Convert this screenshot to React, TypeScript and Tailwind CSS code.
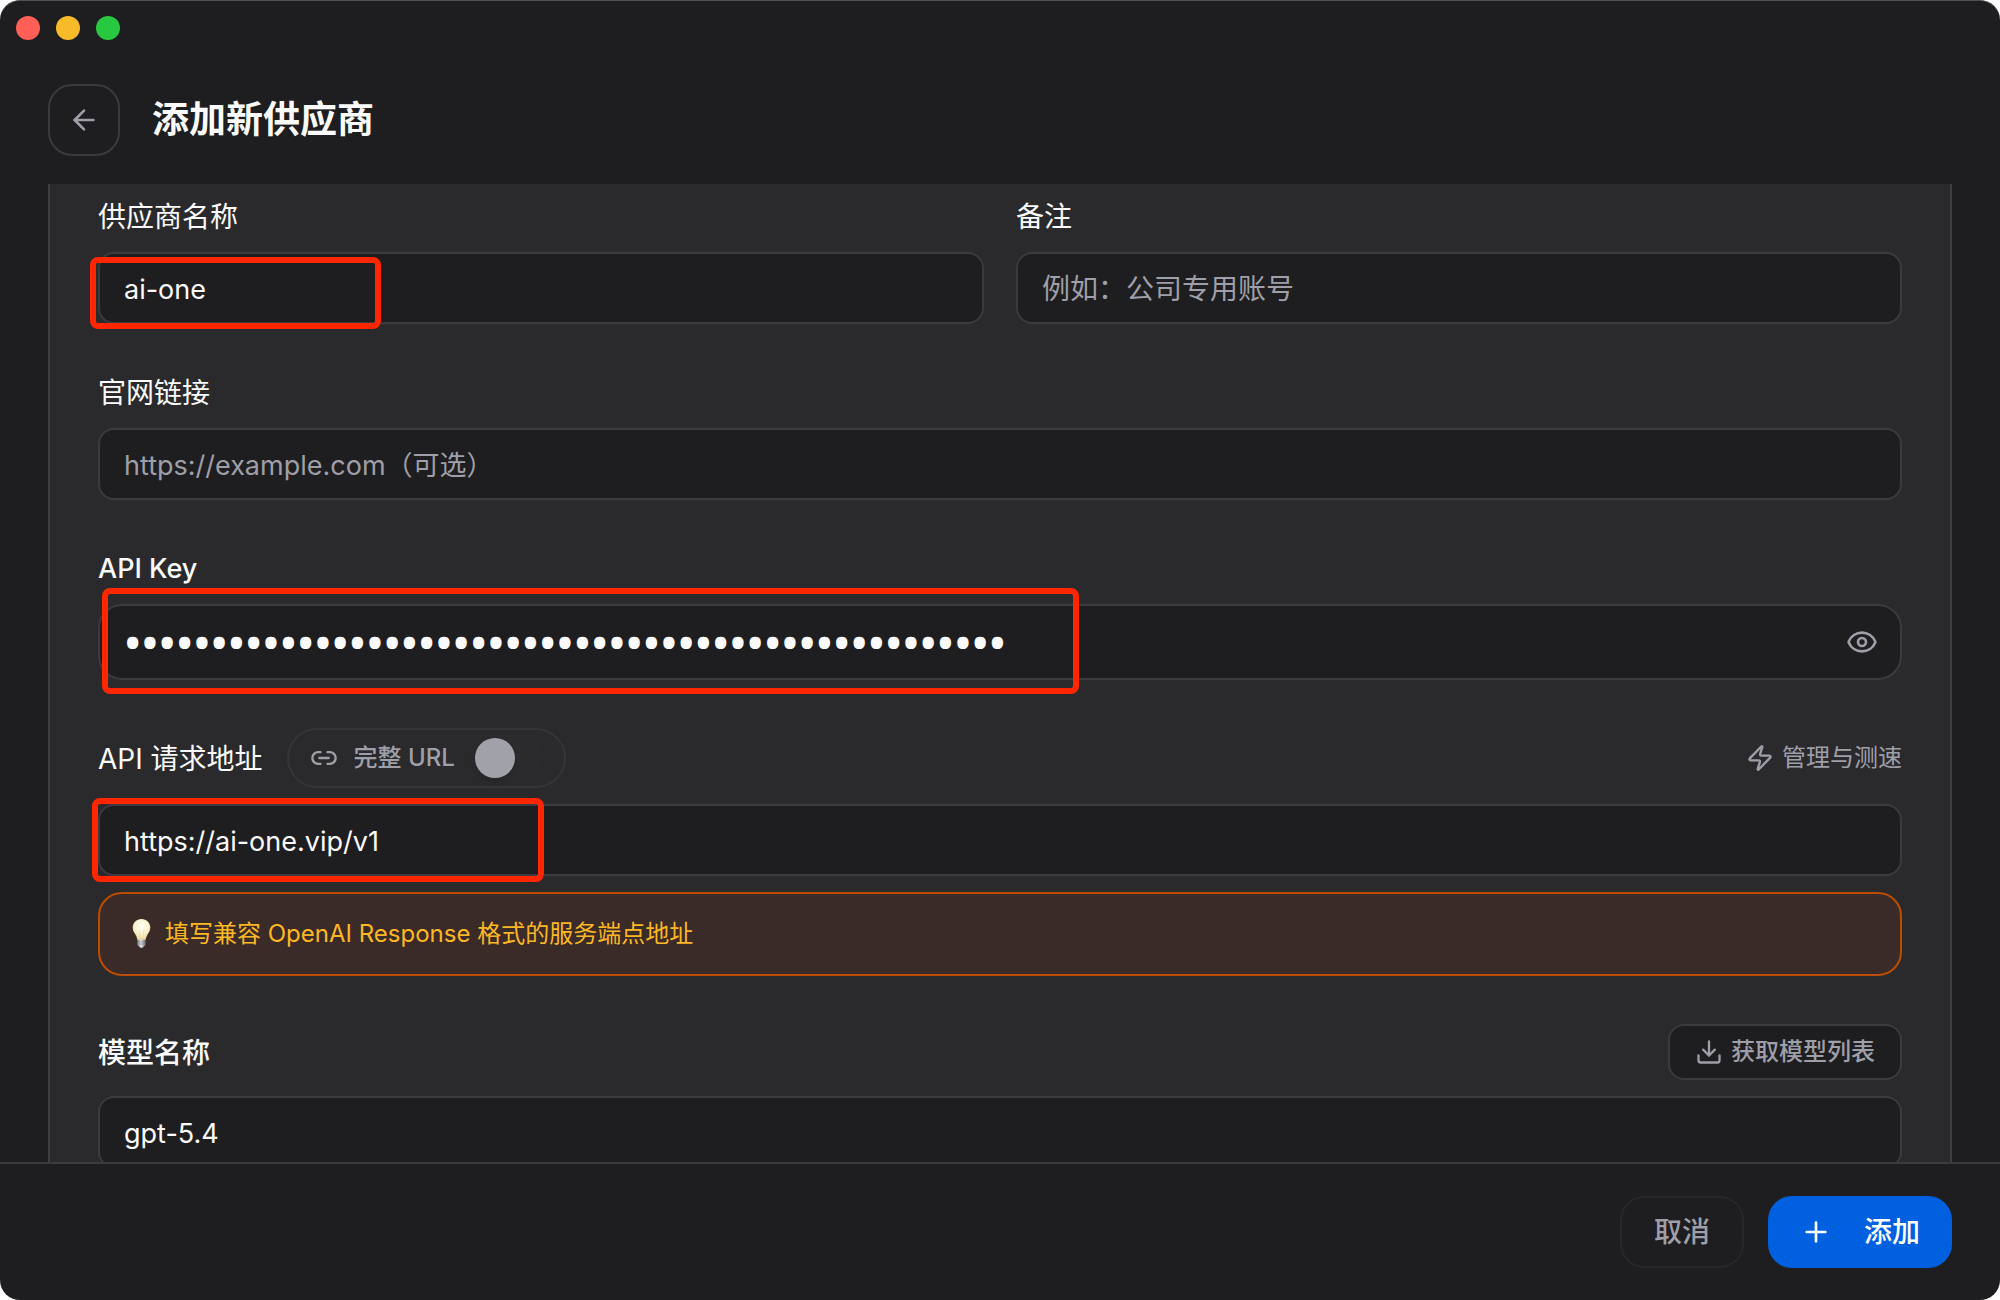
import React, { useState } from 'react';
import { ArrowLeft, Download, Eye, Link2, Plus, Zap } from 'lucide-react';

const labelClass = 'block h-10 pt-px leading-10';

const inputClass =
  'block h-18 w-full rounded-2xl border-2 border-[#3a3a3f] bg-[#1e1e20] px-6 pt-0.5 text-[27px] text-[#fafafa] placeholder:text-[#9f9fa9] placeholder:opacity-100 outline-none focus:border-[#3b82f6]';

// Red frame that marks a field the user has to fill in
const Highlight: React.FC<{ className: string }> = ({ className }) => (
  <div className={`pointer-events-none absolute rounded-lg border-6 border-[#ff2600] ${className}`} />
);

const Bulb: React.FC = () => (
  <svg width="32" height="32" viewBox="0 0 32 32" aria-hidden="true">
    <defs>
      <radialGradient id="bulb-glass" cx="0.5" cy="0.35" r="0.65">
        <stop offset="0" stopColor="#fffef6" />
        <stop offset="0.55" stopColor="#fbf3d0" />
        <stop offset="1" stopColor="#ecd692" />
      </radialGradient>
      <linearGradient id="bulb-base" x1="0" x2="1" y1="0" y2="0">
        <stop offset="0" stopColor="#8d9196" />
        <stop offset="0.45" stopColor="#e4e7ea" />
        <stop offset="1" stopColor="#6f7378" />
      </linearGradient>
    </defs>
    <path
      d="M16.5 1c-5.1 0-8.8 3.8-8.8 8.6 0 3.3 1.7 5.3 3 7.5 1 1.7 1.3 3.1 1.6 4.9h8.4c.3-1.8.6-3.2 1.6-4.9 1.3-2.2 3-4.2 3-7.5 0-4.8-3.7-8.6-8.8-8.6z"
      fill="url(#bulb-glass)"
    />
    <path d="M14 12l1.3 9.5M19 12l-1.3 9.5" stroke="#e6d7a6" strokeWidth="0.6" fill="none" />
    <path d="M12.5 21.5h8v5.2c0 .8-.7 1.3-1.5 1.5-.5 1-1.4 1.5-2.5 1.5s-2-.5-2.5-1.5c-.8-.2-1.5-.7-1.5-1.5z" fill="url(#bulb-base)" />
    <path d="M12.5 23.8h8M12.5 26h8" stroke="#777b80" strokeWidth="0.6" />
  </svg>
);

const App: React.FC = () => {
  const [name, setName] = useState('ai-one');
  const [note, setNote] = useState('');
  const [website, setWebsite] = useState('');
  const [apiKey, setApiKey] = useState('sk-'.padEnd(51, '0'));
  const [showKey, setShowKey] = useState(false);
  const [baseUrl, setBaseUrl] = useState('https://ai-one.vip/v1');
  const [fullUrl, setFullUrl] = useState(false);
  const [model, setModel] = useState('gpt-5.4');

  return (
    <div className="h-screen bg-white">
      <div className="flex h-full flex-col overflow-hidden rounded-[20px] border-t border-[#515153] bg-[#1e1e20] font-[Inter,'Noto_Sans_CJK_SC',sans-serif] text-[#fafafa]">
        {/* Window controls */}
        <div className="flex gap-4 px-4 pt-[15px] pb-4">
          <span className="size-6 rounded-full bg-[#ff5f57]" />
          <span className="size-6 rounded-full bg-[#f7bb2a]" />
          <span className="size-6 rounded-full bg-[#28c840]" />
        </div>

        <header className="flex items-center gap-8 px-12 py-7">
          <button
            type="button"
            aria-label="返回"
            className="flex size-18 items-center justify-center rounded-3xl border-2 border-[#3a3a3f] text-[#9f9fa9] hover:bg-[#2a2a2c]"
          >
            <ArrowLeft size={32} />
          </button>
          <h1 className="text-[37px] leading-10 font-semibold">添加新供应商</h1>
        </header>

        <main className="min-h-0 flex-1 overflow-y-auto px-12 [scrollbar-width:none]">
          <form
            id="provider-form"
            onSubmit={(e) => e.preventDefault()}
            className="space-y-12 border-x-2 border-[#3f3f42] bg-[#2a2a2c] px-12 pt-3 pb-12"
          >
            <div className="grid grid-cols-2 gap-8">
              <div className="space-y-4">
                <label htmlFor="name" className={`${labelClass} text-[28px]`}>供应商名称</label>
                <div className="relative">
                  <input id="name" className={inputClass} value={name} onChange={(e) => setName(e.target.value)} />
                  <Highlight className="top-[5px] -left-2 h-18 w-[291px]" />
                </div>
              </div>
              <div className="space-y-4">
                <label htmlFor="note" className={`${labelClass} text-[28px]`}>备注</label>
                <input
                  id="note"
                  className={`${inputClass} placeholder:text-[28px]`}
                  placeholder="例如：公司专用账号"
                  value={note}
                  onChange={(e) => setNote(e.target.value)}
                />
              </div>
            </div>

            <div className="space-y-4">
              <label htmlFor="website" className={`${labelClass} text-[28px]`}>官网链接</label>
              <input
                id="website"
                className={inputClass}
                placeholder="https://example.com（可选）"
                value={website}
                onChange={(e) => setWebsite(e.target.value)}
              />
            </div>

            <div className="space-y-4">
              <label htmlFor="api-key" className={`${labelClass} text-[27px] font-medium`}>API Key</label>
              <div className="relative">
                <input
                  id="api-key"
                  type={showKey ? 'text' : 'password'}
                  autoComplete="off"
                  className={`block h-19 w-full rounded-3xl border-2 border-[#3a3a3f] bg-[#1e1e20] pr-20 pb-0.5 pl-6 text-[#fafafa] outline-none focus:border-[#3b82f6] ${
                    showKey ? 'text-[27px]' : "font-['Open_Sans',sans-serif] text-[46px] font-semibold"
                  }`}
                  value={apiKey}
                  onChange={(e) => setApiKey(e.target.value)}
                />
                <button
                  type="button"
                  aria-label="显示 API Key"
                  onClick={() => setShowKey(!showKey)}
                  className="absolute inset-y-0 right-6 flex items-center text-[#9f9fa9] hover:text-[#fafafa]"
                >
                  <Eye size={32} />
                </button>
                <Highlight className="-top-4 left-1 h-[106px] w-[977px]" />
              </div>
            </div>

            <div className="space-y-4">
              <div className="flex items-center justify-between">
                <div className="flex items-center gap-6">
                  <label htmlFor="base-url" className={`${labelClass} text-[28px]`}>API 请求地址</label>
                  <label className="flex h-15 cursor-pointer items-center gap-4 rounded-full border-2 border-[#353538] px-[21px] text-2xl font-medium text-[#9f9fa9]">
                    <Link2 size={28} />
                    完整 URL
                    <input
                      type="checkbox"
                      role="switch"
                      className="peer sr-only"
                      checked={fullUrl}
                      onChange={(e) => setFullUrl(e.target.checked)}
                    />
                    <span className="flex h-11 w-18 items-center rounded-full bg-[#2b2b2d] px-1 peer-checked:justify-end peer-checked:bg-[#0060e0]">
                      <span className="size-10 rounded-full bg-[#a1a1aa] shadow-md" />
                    </span>
                  </label>
                </div>
                <button type="button" className="flex items-center gap-2 text-2xl text-[#9f9fa9] hover:text-[#fafafa]">
                  <Zap size={28} />
                  管理与测速
                </button>
              </div>
              <div className="relative">
                <input id="base-url" className={inputClass} value={baseUrl} onChange={(e) => setBaseUrl(e.target.value)} />
                <Highlight className="-top-1.5 -left-1.5 h-21 w-[452px]" />
              </div>
              <div className="flex items-center gap-2 rounded-3xl border-2 border-[#bb4d00] bg-[#3a2a28] px-[25px] py-6 text-2xl text-[#fbb824]">
                <Bulb />
                <p>填写兼容 OpenAI Response 格式的服务端点地址</p>
              </div>
            </div>

            <div className="space-y-4">
              <div className="flex items-center justify-between">
                <label htmlFor="model" className={`${labelClass} text-[28px] font-medium`}>模型名称</label>
                <button
                  type="button"
                  className="flex h-14 items-center gap-2 rounded-2xl border-2 border-[#3a3a3f] bg-[#1e1e20] px-[25px] text-2xl font-medium text-[#9f9fa9] hover:text-[#fafafa]"
                >
                  <Download size={28} />
                  获取模型列表
                </button>
              </div>
              <input id="model" className={inputClass} value={model} onChange={(e) => setModel(e.target.value)} />
            </div>
          </form>
        </main>

        <footer className="flex justify-end gap-6 border-t-2 border-[#3a3a3f] px-12 py-8 text-[28px] font-medium">
          <button
            type="button"
            className="h-18 rounded-3xl border-2 border-[#27272a] px-8 text-[#9f9fa9] hover:bg-[#2a2a2c]"
          >
            取消
          </button>
          <button
            type="submit"
            form="provider-form"
            className="flex h-18 items-center gap-8 rounded-3xl bg-[#0060e0] px-8 text-white hover:bg-[#0a6df0]"
          >
            <Plus size={32} />
            添加
          </button>
        </footer>
      </div>
    </div>
  );
};

export default App;
